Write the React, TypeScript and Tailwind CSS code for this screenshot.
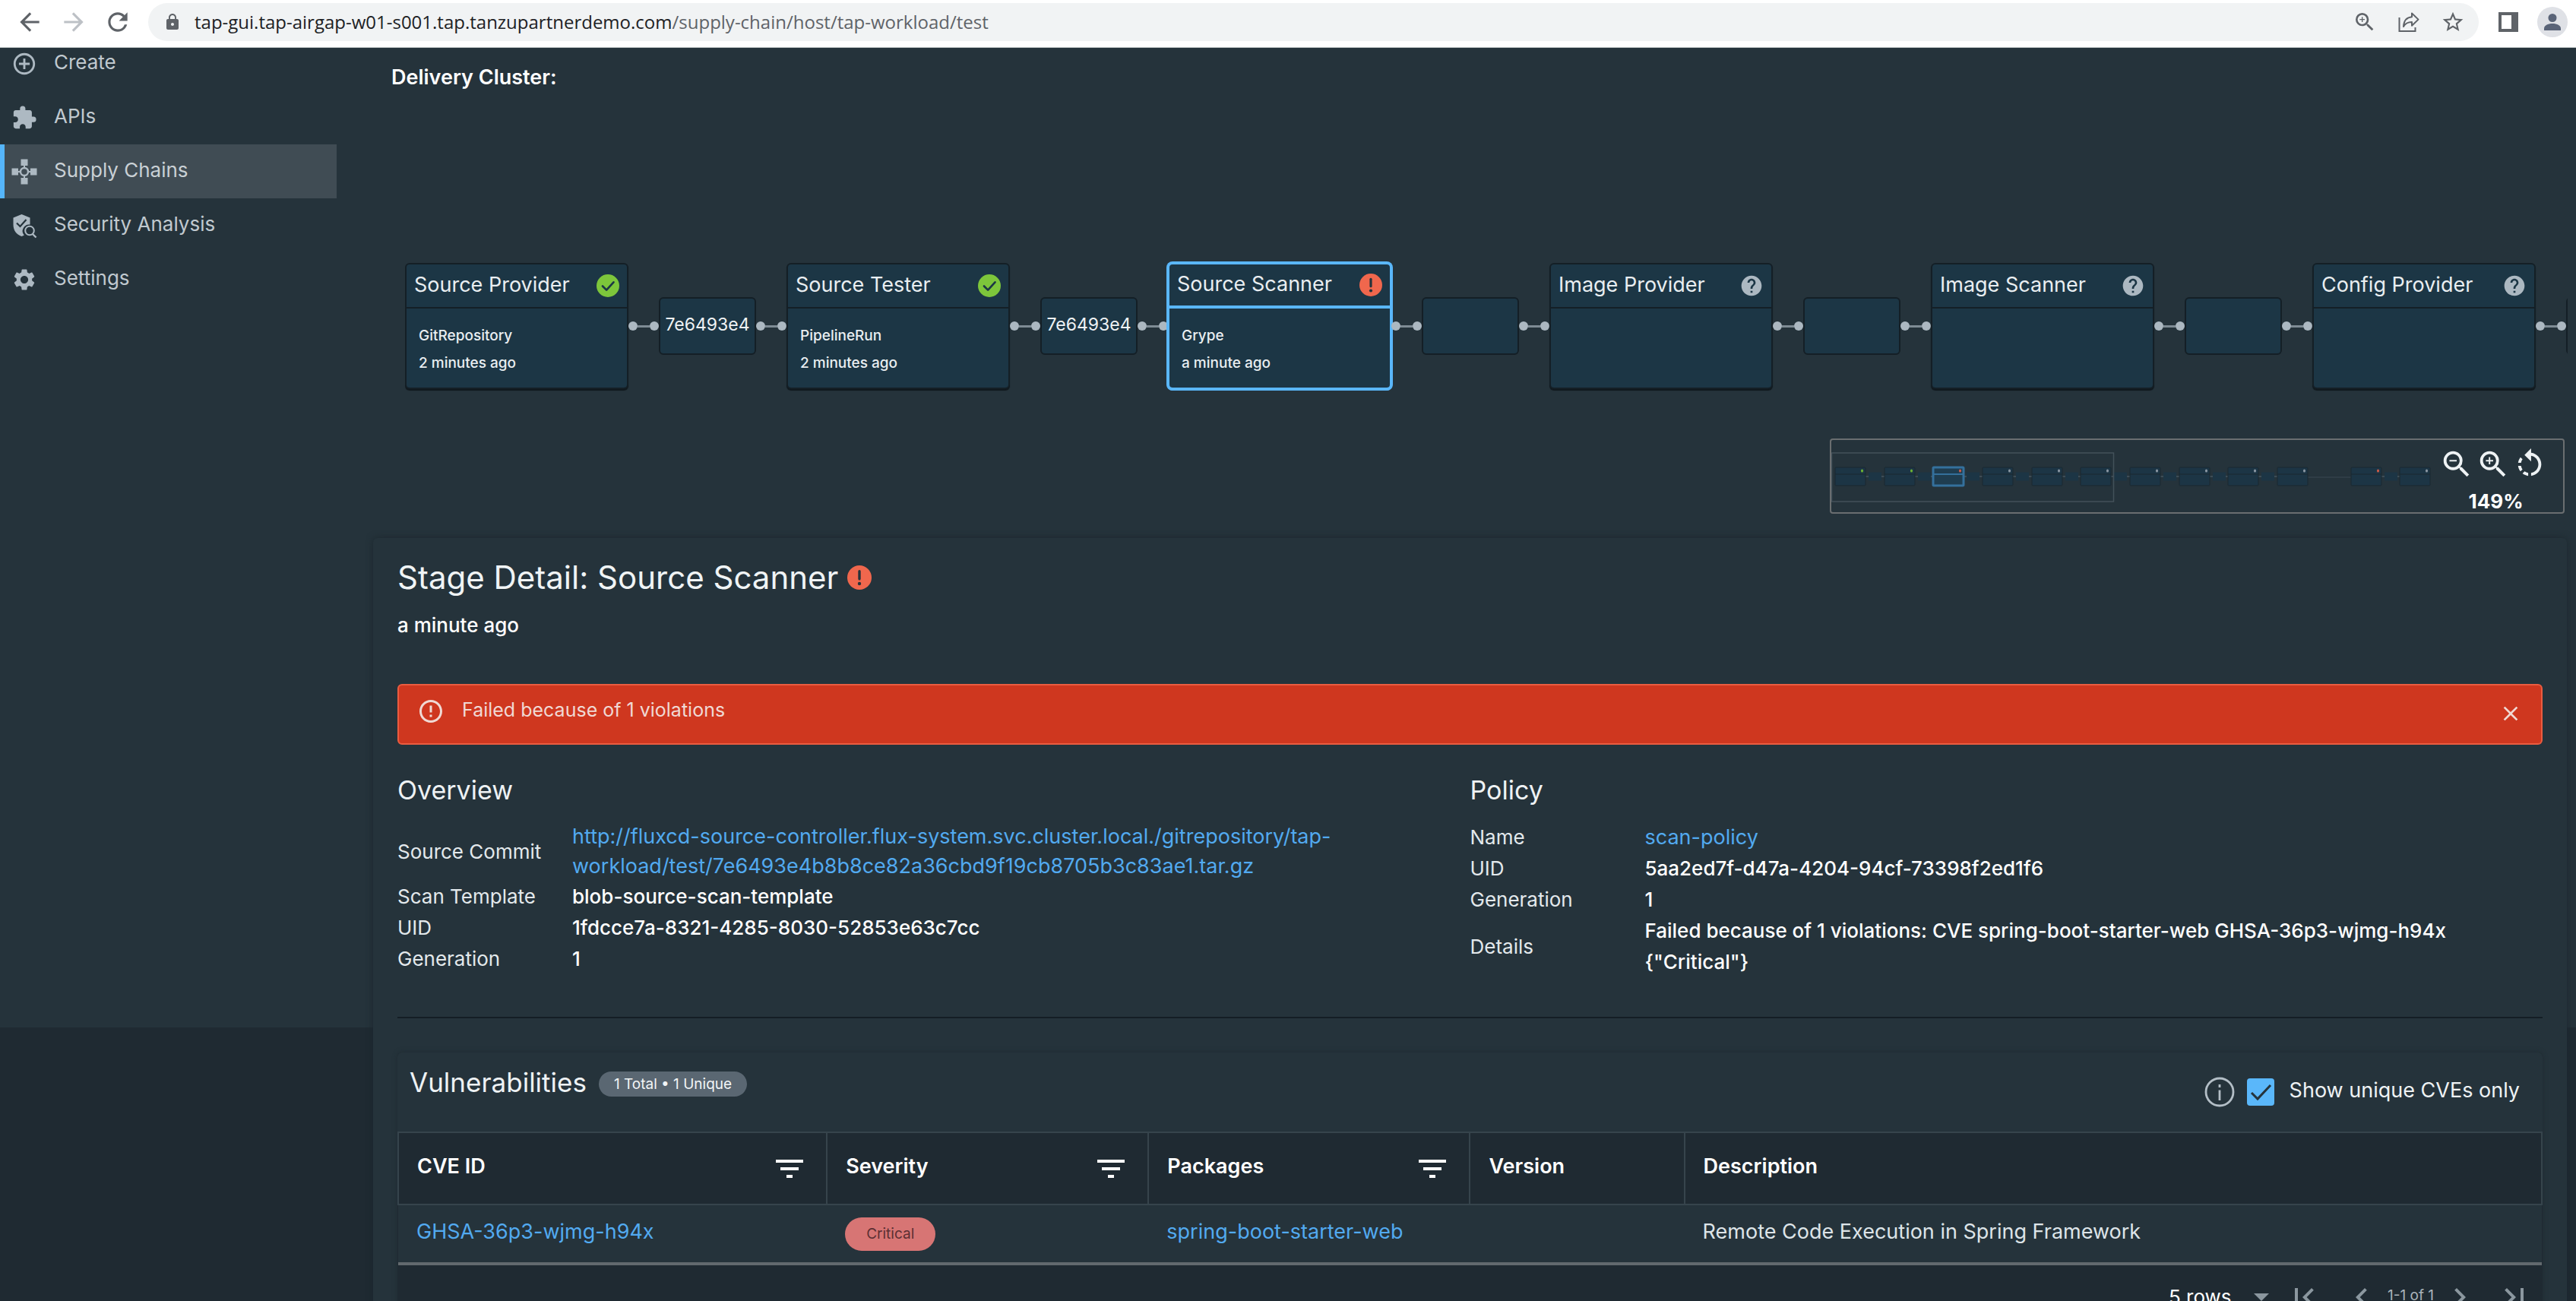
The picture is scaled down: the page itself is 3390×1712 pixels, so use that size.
import { Fragment, type ReactNode } from "react";
import {
  MdAddCircleOutline,
  MdArrowBack,
  MdArrowForward,
  MdChevronLeft,
  MdChevronRight,
  MdClose,
  MdErrorOutline,
  MdExtension,
  MdFilterList,
  MdFirstPage,
  MdHelp,
  MdLastPage,
  MdLock,
  MdRefresh,
  MdRotateLeft,
  MdSettings,
  MdStarBorder,
  MdZoomIn,
  MdZoomOut,
} from "react-icons/md";

type Status = "ok" | "error" | "unknown";

/* ---------- icons ---------- */

function SupplyChainIcon() {
  return (
    <svg viewBox="0 0 34 34" className="size-[34px]" fill="currentColor" aria-hidden="true">
      <rect x="12.5" y="0.5" width="9" height="8.5" />
      <rect x="12.5" y="25" width="9" height="8.5" />
      <rect x="0.5" y="12.5" width="8.5" height="9" />
      <rect x="25" y="12.5" width="8.5" height="9" />
      <circle cx="17" cy="17" r="5" fill="none" stroke="currentColor" strokeWidth="2.4" />
      <path d="M16 9h2v3h-2zM16 22h2v3h-2zM9 16h3v2H9zM22 16h3v2h-3z" />
    </svg>
  );
}

function SecurityIcon() {
  return (
    <svg viewBox="0 0 34 34" className="size-[34px]" aria-hidden="true">
      <path
        d="M13.5 2 2.500 6.500v9c0 8 4.500 13.500 11 15.500 1.200-.3 2.300-.8 3.300-1.400a8.600 8.600 0 0 1 7.700-14.100V6.500z"
        fill="currentColor"
      />
      <path d="m7 13.500 4.500 4.500 8-9" fill="none" stroke="#25333b" strokeWidth="2.200" />
      <circle cx="24" cy="23.500" r="5.800" fill="#25333b" stroke="currentColor" strokeWidth="2" />
      <path d="m28 28 4.500 4.500" stroke="currentColor" strokeWidth="2.400" />
    </svg>
  );
}

function ShareIcon() {
  return (
    <svg viewBox="0 0 28 28" className="size-7" fill="none" stroke="currentColor" strokeWidth="2" aria-hidden="true">
      <path d="M1.500 8v18h21v-5" />
      <path d="M18 2.500v4.800C10.500 7.800 7.500 12 7 20c2.500-4.500 5.500-6 11-6v4.800l8.500-8.200z" strokeLinejoin="round" />
    </svg>
  );
}

function AlertBadge({ className }: { className: string }) {
  return (
    <svg viewBox="0 0 32 32" className={className} role="img" aria-label="Failed">
      <circle cx="16" cy="16" r="16" fill="#f0674d" />
      <rect x="14.300" y="6" width="3.400" height="13.500" rx="1.700" fill="#25333b" />
      <circle cx="16" cy="24" r="2.200" fill="#25333b" />
    </svg>
  );
}

function StatusIcon({ status }: { status: Status }) {
  if (status === "ok")
    return (
      <svg viewBox="0 0 32 32" className="size-[30px]" role="img" aria-label="Succeeded">
        <circle cx="16" cy="16" r="16" fill="#7dc63b" />
        <path d="m8.500 16.500 5.500 5.500 10-11" fill="none" stroke="#1c3645" strokeWidth="2.800" strokeLinecap="round" strokeLinejoin="round" />
      </svg>
    );
  if (status === "error") return <AlertBadge className="size-[30px]" />;
  return <MdHelp className="size-8 text-[#acb8c1]" role="img" aria-label="Unknown" />;
}

function InfoIcon() {
  return (
    <svg viewBox="0 0 40 40" className="size-10" fill="none" stroke="#b3bec6" strokeWidth="2.800" aria-hidden="true">
      <circle cx="20" cy="20" r="18" />
      <path d="M20 17.500V31" />
      <path d="M20 10v4" />
    </svg>
  );
}

/* ---------- browser bar ---------- */

function BrowserBar() {
  return (
    <header className="flex items-center border-b border-[#b9c0c0] bg-white pt-1 pr-[11px] pb-2 pl-5 text-[#5f6368]">
      <div className="flex items-center gap-5 pr-[21px]">
        <button aria-label="Back"><MdArrowBack className="size-[38px]" /></button>
        <button aria-label="Forward" className="text-[#bdc1c6]"><MdArrowForward className="size-[38px]" /></button>
        <button aria-label="Reload"><MdRefresh className="size-[38px]" /></button>
      </div>
      <div className="flex h-[50px] flex-1 items-center rounded-full bg-[#f1f3f4] pr-[18px] pl-5">
        <MdLock className="size-6" />
        <a href="#" className="flex-1 pl-[17px] font-['Open_Sans',sans-serif] text-2xl text-[#5f6368]">
          <span className="text-[#202124]">tap-gui.tap-airgap-w01-s001.tap.tanzupartnerdemo.com</span>
          /supply-chain/host/tap-workload/test
        </a>
        <div className="flex items-center gap-7">
          <button aria-label="Zoom"><MdZoomIn className="size-8" /></button>
          <button aria-label="Share"><ShareIcon /></button>
          <button aria-label="Bookmark"><MdStarBorder className="size-8" /></button>
        </div>
      </div>
      <button aria-label="Side panel" className="ml-[26px]">
        <svg viewBox="0 0 26 26" className="size-[26px]" aria-hidden="true">
          <path fillRule="evenodd" d="M0 0h26v26H0zM4 4v18h13V4z" fill="#5f6368" />
        </svg>
      </button>
      <button aria-label="Profile" className="ml-[25px]">
        <svg viewBox="0 0 40 40" className="size-10" aria-hidden="true">
          <circle cx="20" cy="20" r="20" fill="#dfe1e6" />
          <circle cx="20" cy="14.500" r="5.500" fill="#5a6478" />
          <path d="M9 31v-2.500C9 24.500 14 22 20 22s11 2.500 11 6.500V31z" fill="#5a6478" />
        </svg>
      </button>
    </header>
  );
}

/* ---------- sidebar ---------- */

const NAV = [
  { label: "Create", icon: <MdAddCircleOutline className="size-[34px]" /> },
  { label: "APIs", icon: <MdExtension className="size-[34px]" /> },
  { label: "Supply Chains", icon: <SupplyChainIcon />, active: true },
  { label: "Security Analysis", icon: <SecurityIcon /> },
  { label: "Settings", icon: <MdSettings className="size-[34px]" /> },
];

function Sidebar() {
  return (
    <nav className="w-[443px] shrink-0">
      <ul className="-mt-[15px]">
        {NAV.map((item) => (
          <li key={item.label}>
            <a
              href="#"
              aria-current={item.active ? "page" : undefined}
              className={
                item.active
                  ? "flex h-[71px] items-center gap-[22px] border-l-6 border-[#55b5fa] bg-[#404c54] pl-[9px] text-[26px] text-[#c9d0d5]"
                  : "flex h-[71px] items-center gap-[22px] border-l-6 border-transparent pl-[9px] text-[26px] text-[#c0c9cf]"
              }
            >
              <span className="text-[#adb9c2]">{item.icon}</span>
              <span className="pb-1">{item.label}</span>
            </a>
          </li>
        ))}
      </ul>
    </nav>
  );
}

/* ---------- pipeline ---------- */

type Stage = { name: string; status: Status; kind?: string; age?: string; output?: string; selected?: boolean };

const STAGES: Stage[] = [
  { name: "Source Provider", status: "ok", kind: "GitRepository", age: "2 minutes ago", output: "7e6493e4" },
  { name: "Source Tester", status: "ok", kind: "PipelineRun", age: "2 minutes ago", output: "7e6493e4" },
  { name: "Source Scanner", status: "error", kind: "Grype", age: "a minute ago", selected: true },
  { name: "Image Provider", status: "unknown" },
  { name: "Image Scanner", status: "unknown" },
  { name: "Config Provider", status: "unknown" },
];

function Connector() {
  return (
    <div className="flex w-10 shrink-0 items-center" aria-hidden="true">
      <span className="size-3 rounded-full bg-[#acb8c1]" />
      <span className="h-[3px] flex-1 bg-[#7e8b94]" />
      <span className="size-3 rounded-full bg-[#acb8c1]" />
    </div>
  );
}

function StageCard({ stage }: { stage: Stage }) {
  return (
    <button
      className={
        stage.selected
          ? "flex w-[294px] shrink-0 flex-col rounded-md border-2 border-[#5ab7fa] bg-[#1c3645] text-left shadow-[0_2px_0_#5ab7fa] ring-2 ring-[#5ab7fa]"
          : "flex w-[294px] shrink-0 flex-col rounded-md border-2 border-[#141f26] bg-[#1c3645] text-left shadow-[0_2px_1px_#10181d]"
      }
    >
      <span
        className={
          stage.selected
            ? "flex h-[58px] w-full items-center justify-between border-b-4 border-[#5ab7fa] px-[10px]"
            : "flex h-[58px] w-full items-center justify-between border-b-2 border-[#141f26] px-[10px]"
        }
      >
        <span className="pb-0.5 text-[27px] leading-8 text-[#e9eef1]">{stage.name}</span>
        <StatusIcon status={stage.status} />
      </span>
      <span className="flex h-[104px] flex-col px-4 pt-[18px] text-[19px] leading-9 font-medium text-[#e9eef1]">
        <span>{stage.kind}</span>
        <span>{stage.age}</span>
      </span>
    </button>
  );
}

function OutputBox({ label }: { label?: string }) {
  return (
    <div className="flex h-[76px] w-32 shrink-0 items-center justify-center rounded-md border-2 border-[#141f26] bg-[#1c3645] pb-1 text-[23px] text-[#eef2f4]">
      {label}
    </div>
  );
}

function Pipeline() {
  return (
    <div className="mt-[222px] mr-[11px] ml-[90px] flex items-center overflow-hidden py-1.5">
      {STAGES.map((s) => (
        <Fragment key={s.name}>
          <StageCard stage={s} />
          <Connector />
          <OutputBox label={s.output} />
          <Connector />
        </Fragment>
      ))}
    </div>
  );
}

const MINI: { x: number; color: string; box?: boolean; selected?: boolean }[] = [
  { x: 5, color: "#6bb035", box: true },
  { x: 70, color: "#6bb035", box: true },
  { x: 134, color: "#c95a48", box: true, selected: true },
  { x: 199, color: "#8794a0", box: true },
  { x: 264, color: "#8794a0", box: true },
  { x: 328, color: "#8794a0", box: true },
  { x: 393, color: "#8794a0", box: true },
  { x: 458, color: "#8794a0", box: true },
  { x: 522, color: "#8794a0", box: true },
  { x: 587, color: "#8794a0" },
  { x: 684, color: "#c95a48", box: true },
  { x: 748, color: "#8794a0" },
];

function MiniMap() {
  return (
    <div className="mt-[59px] mr-[15px] ml-auto flex w-[967px] rounded-sm border-2 border-[#6a6e70]">
      <svg viewBox="0 0 790 95" className="h-[95px] w-[790px]" aria-hidden="true">
        <path d="M627 49h57" stroke="#33424b" strokeWidth="1.500" />
        {MINI.map((m) => (
          <g key={m.x}>
            {m.box && (
              <>
                <path d={`M${m.x + 40} 48h25`} stroke="#3d4c56" strokeWidth="2" />
                <rect x={m.x + 44} y="42.500" width="17" height="11" fill="#1c3545" />
              </>
            )}
            <rect
              x={m.x}
              y="36"
              width="40"
              height="24"
              rx="1"
              fill={m.selected ? "#1f3d50" : "#1c3545"}
              stroke={m.selected ? "#34709c" : "#1a2931"}
              strokeWidth={m.selected ? 3 : 1}
            />
            <path d={`M${m.x} 45h40`} stroke={m.selected ? "#34709c" : "#1a2931"} strokeWidth={m.selected ? 2 : 1} />
            <rect x={m.x + 34} y="38.500" width="3" height="4" rx="1.500" fill={m.color} />
          </g>
        ))}
        <rect x="0.500" y="17" width="371" height="64" fill="none" stroke="#43515a" strokeWidth="1.500" />
      </svg>
      <div className="flex flex-1 flex-col items-center pt-[9px] pr-3">
        <div className="flex items-center gap-0.5 text-[#eef2f4]">
          <button aria-label="Zoom out"><MdZoomOut className="size-[46px]" /></button>
          <button aria-label="Zoom in"><MdZoomIn className="size-[46px]" /></button>
          <button aria-label="Reset view"><MdRotateLeft className="size-[46px]" /></button>
        </div>
        <div className="-mb-2 pt-2 pl-2 text-[26px] leading-9 font-bold text-white">149%</div>
      </div>
    </div>
  );
}

/* ---------- stage detail ---------- */

function Link({ children }: { children: ReactNode }) {
  return (
    <a href="#" className="text-[27px] font-normal text-[#52aaf0]">
      {children}
    </a>
  );
}

function Facts({ title, rows, lineClass }: { title: string; rows: [string, ReactNode][]; lineClass: string }) {
  return (
    <section className="flex-1">
      <h2 className="text-[34px] leading-11 text-[#eef2f4]">{title}</h2>
      <dl className="mt-[19px] grid grid-cols-[230px_1fr] items-center pr-[90px] text-[26px] leading-[41px] text-[#e3e9ec]">
        {rows.map(([k, v]) => (
          <Fragment key={k}>
            <dt>{k}</dt>
            <dd className={lineClass}>{v}</dd>
          </Fragment>
        ))}
      </dl>
    </section>
  );
}

const COLUMNS = [
  { name: "CVE ID", filter: true, width: "w-[20%]" },
  { name: "Severity", filter: true, width: "w-[15%]" },
  { name: "Packages", filter: true, width: "w-[15%]" },
  { name: "Version", filter: false, width: "w-[10%]" },
  { name: "Description", filter: false, width: "w-[40%]" },
];

function Vulnerabilities() {
  return (
    <section className="mt-[45px] rounded-t-md bg-[#1f2a32] shadow-[0_0_6px_#1f2b32]">
      <div className="flex items-center justify-between rounded-t-md bg-[#25333b] pr-[30px] pl-4">
        <div className="flex items-center gap-4 pt-[17px] pb-[43px]">
          <h2 className="text-[35px] leading-11 text-[#eef2f4]">Vulnerabilities</h2>
          <span className="mt-1 rounded-full bg-[#5a6772] px-5 text-[19px] leading-[33px] text-[#f2f5f6]">1 Total • 1 Unique</span>
        </div>
        <div className="flex items-center gap-4">
          <InfoIcon />
          <label className="flex items-center gap-5 text-[27px] text-[#eef2f4]">
            <span className="relative flex">
              <input type="checkbox" defaultChecked className="size-9 appearance-none rounded-sm bg-[#5ab7fa]" />
              <svg viewBox="0 0 36 36" className="pointer-events-none absolute inset-0 size-9" fill="none" stroke="#25333b" strokeWidth="3" aria-hidden="true">
                <path d="m6 19 8 8L31 9" />
              </svg>
            </span>
            <span className="pb-1">Show unique CVEs only</span>
          </label>
        </div>
      </div>
      <table className="w-full table-fixed border-collapse text-left text-[27px]">
        <thead>
          <tr>
            {COLUMNS.map((c) => (
              <th key={c.name} className={`${c.width} border-2 border-[#36444c] p-0 font-semibold text-white`}>
                <div className="flex h-[93px] items-center justify-between pr-6 pl-6">
                  <span className="pb-1">{c.name}</span>
                  {c.filter && (
                    <button aria-label={`Filter ${c.name}`}>
                      <MdFilterList className="size-12" />
                    </button>
                  )}
                </div>
              </th>
            ))}
          </tr>
        </thead>
        <tbody>
          <tr className="h-[78px] border-b-4 border-[#62696e] bg-[#25333b] text-[#dde4e8]">
            <td className="px-6 pb-1"><Link>GHSA-36p3-wjmg-h94x</Link></td>
            <td className="px-6">
              <span className="inline-block rounded-full bg-[#d77574] px-7 align-middle text-[19px] leading-11 text-[#5c2f33]">Critical</span>
            </td>
            <td className="px-6 pb-1"><Link>spring-boot-starter-web</Link></td>
            <td />
            <td className="px-6 pb-1">Remote Code Execution in Spring Framework</td>
          </tr>
        </tbody>
      </table>
      <div className="flex items-center justify-end pt-[18px] pr-[13px] pb-10 text-[#8b979f]">
        <label className="flex items-center">
          <select aria-label="Rows per page" className="w-[98px] appearance-none text-[26px] leading-[46px] text-white">
            <option>5 rows</option>
          </select>
          <svg viewBox="0 0 20 10" className="mr-[22px] ml-[14px] h-2.5 w-5" fill="currentColor" aria-hidden="true">
            <path d="M0 0h20L10 10z" />
          </svg>
        </label>
        <button aria-label="First page"><MdFirstPage className="size-12" /></button>
        <button aria-label="Previous page" className="ml-7"><MdChevronLeft className="size-12" /></button>
        <span className="mx-[10px] pb-1 text-[19px] text-[#aab4bb]">1-1 of 1</span>
        <button aria-label="Next page"><MdChevronRight className="size-12" /></button>
        <button aria-label="Last page" className="ml-6"><MdLastPage className="size-12" /></button>
      </div>
    </section>
  );
}

function StageDetail() {
  return (
    <section className="mt-8 mr-3 ml-12 rounded-t-md bg-[#25333b] px-8 shadow-[0_0_10px_#1c272e]">
      <h1 className="flex items-center gap-3 pt-6 text-[42px] leading-14 text-[#f0f4f5]">
        Stage Detail: Source Scanner
        <AlertBadge className="size-8" />
      </h1>
      <p className="mt-[19px] text-[26px] leading-8 font-medium text-white">a minute ago</p>
      <div role="alert" className="mt-[61px] flex items-center rounded-md border-2 border-[#ea5c40] bg-[#cf371f] pt-[15px] pr-6 pb-[23px] pl-6 text-[#f0d9d4]">
        <MdErrorOutline className="size-9" />
        <p className="flex-1 pb-1 pl-[23px] text-[25px] leading-[34px]">Failed because of 1 violations</p>
        <button aria-label="Dismiss" className="pt-1.5">
          <MdClose className="size-8" />
        </button>
      </div>
      <div className="mt-[38px] flex">
        <Facts
          title="Overview"
          lineClass="font-medium text-white first-of-type:leading-[39px]"
          rows={[
            [
              "Source Commit",
              <Link>
                http://fluxcd-source-controller.flux-system.svc.cluster.local./gitrepository/tap-workload/test/7e6493e4b8b8ce82a36cbd9f19cb8705b3c83ae1.tar.gz
              </Link>,
            ],
            ["Scan Template", "blob-source-scan-template"],
            ["UID", "1fdcce7a-8321-4285-8030-52853e63c7cc"],
            ["Generation", "1"],
          ]}
        />
        <Facts
          title="Policy"
          lineClass="font-medium text-white"
          rows={[
            ["Name", <Link>scan-policy</Link>],
            ["UID", "5aa2ed7f-d47a-4204-94cf-73398f2ed1f6"],
            ["Generation", "1"],
            ["Details", 'Failed because of 1 violations: CVE spring-boot-starter-web GHSA-36p3-wjmg-h94x {"Critical"}'],
          ]}
        />
      </div>
      <hr className="mt-[52px] border-t-2 border-[#141e25]" />
      <Vulnerabilities />
    </section>
  );
}

export default function App() {
  return (
    <div className="flex h-screen flex-col overflow-hidden bg-[#1f2a32] font-['Inter',sans-serif]">
      <BrowserBar />
      <div className="flex min-h-0 flex-1 overflow-hidden bg-[linear-gradient(#25333b_1289px,#1f2a32_1289px)]">
        <Sidebar />
        <main className="min-w-0 flex-1">
          <p className="pt-[23px] pl-[72px] text-[27px] leading-8 font-semibold text-white">Delivery Cluster:</p>
          <Pipeline />
          <MiniMap />
          <StageDetail />
        </main>
      </div>
    </div>
  );
}
